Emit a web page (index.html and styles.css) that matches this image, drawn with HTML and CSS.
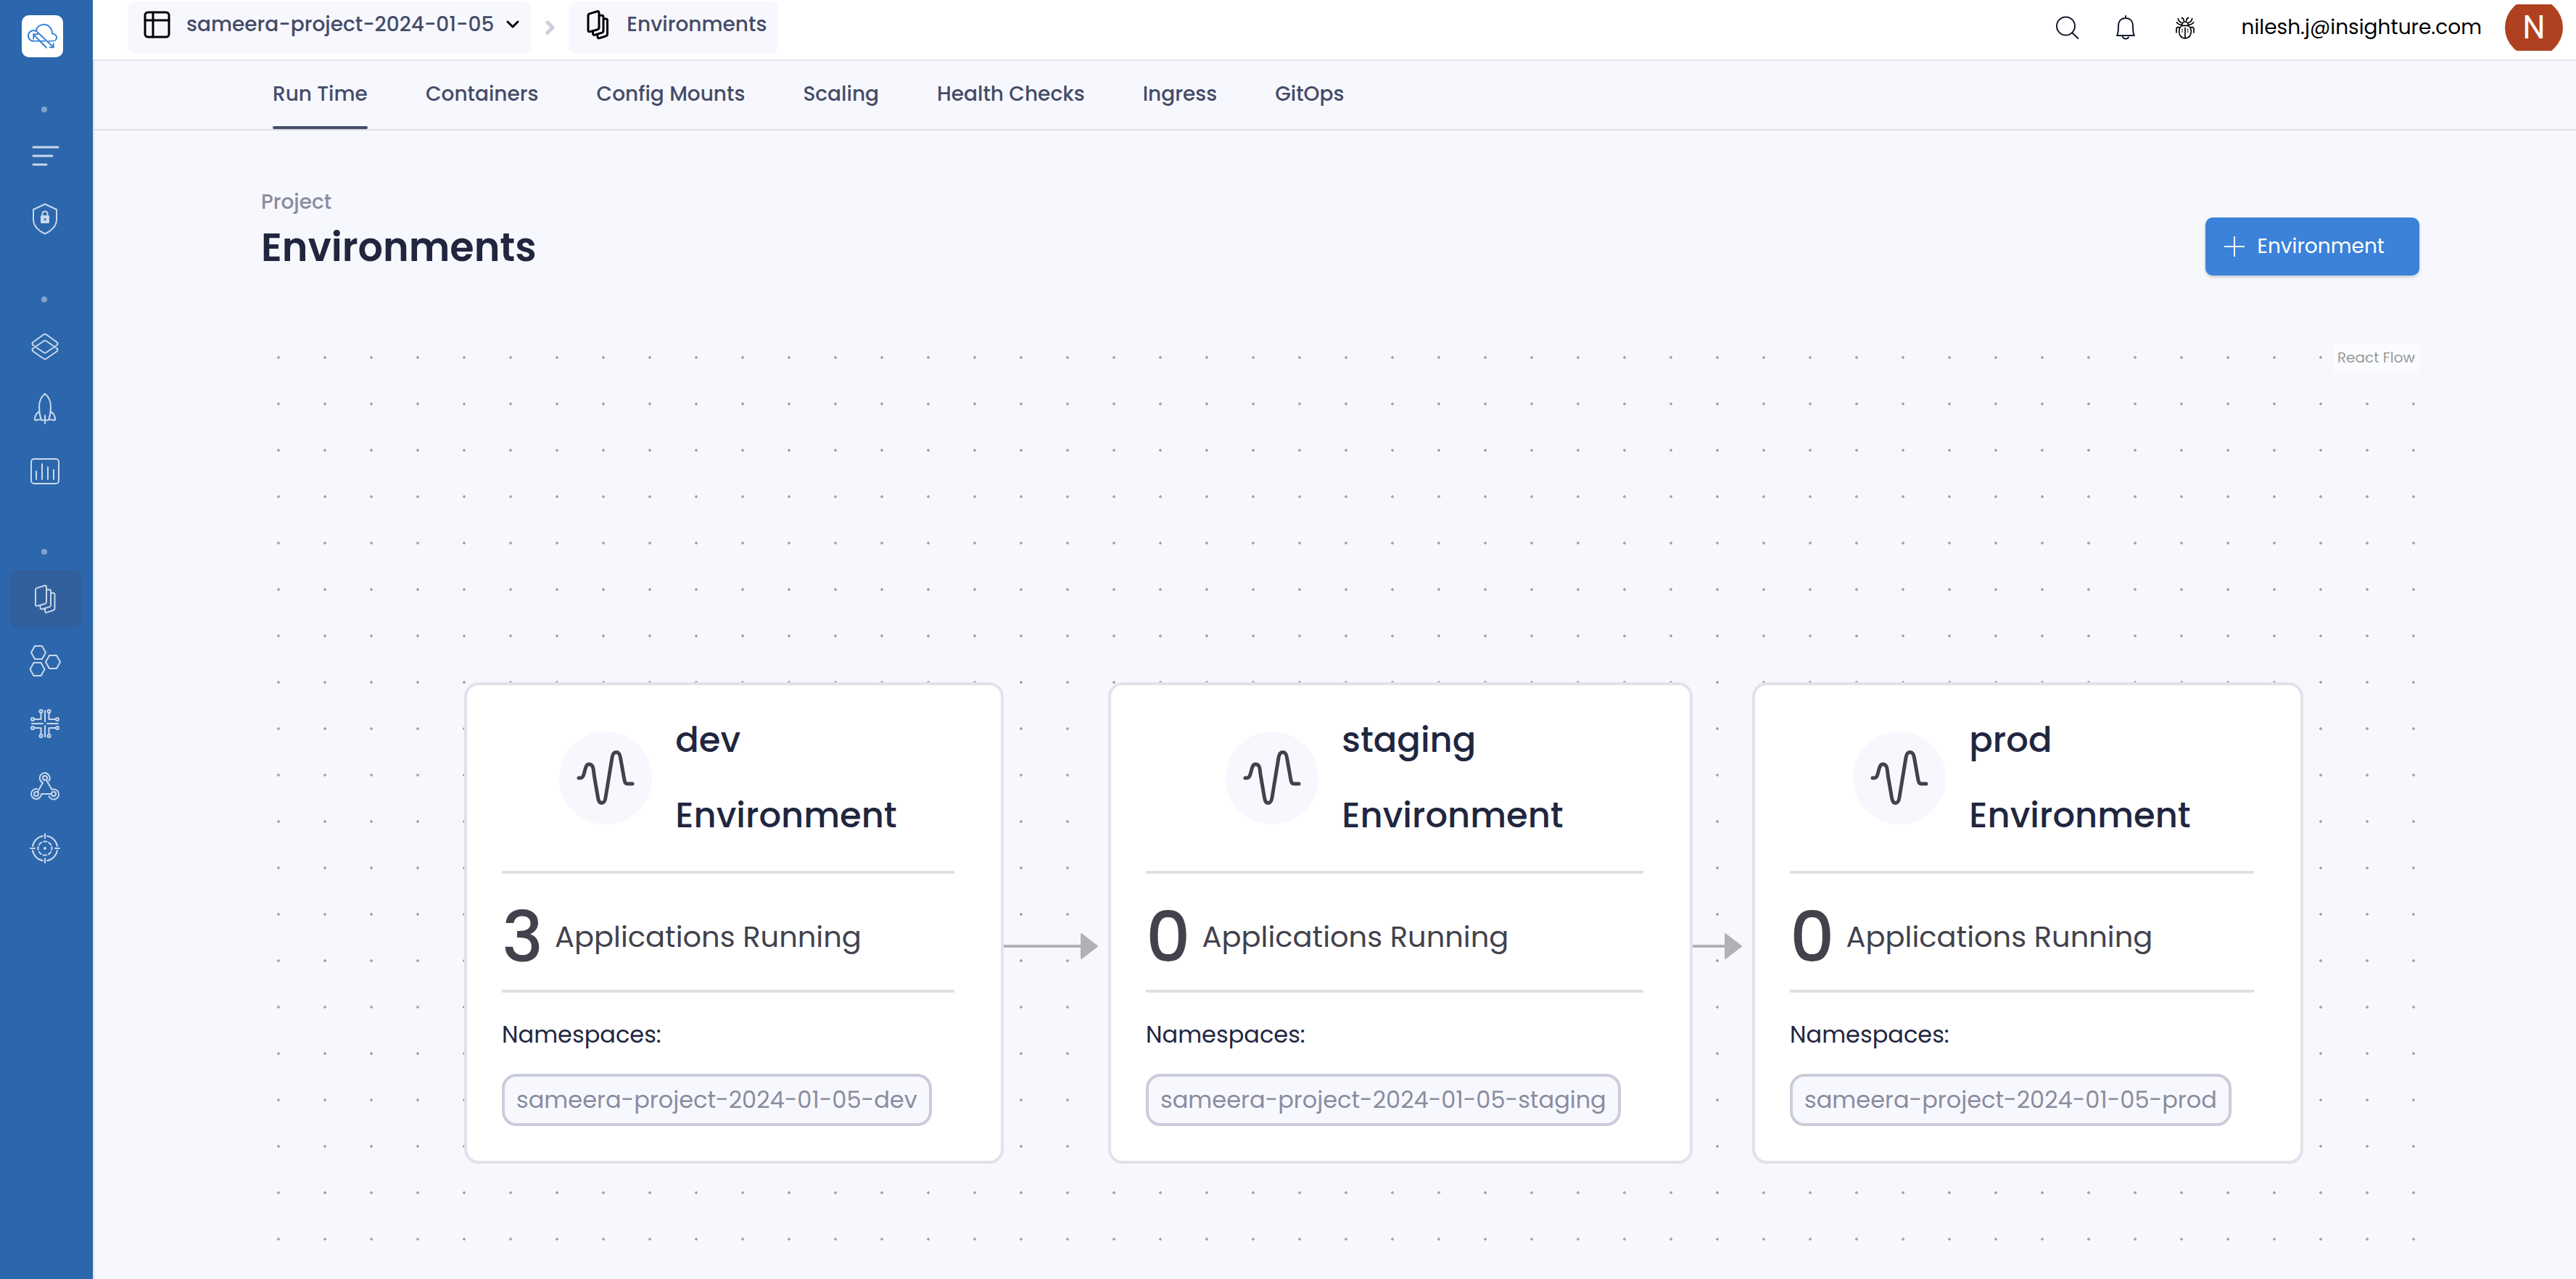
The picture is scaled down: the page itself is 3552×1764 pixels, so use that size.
FILE: index.html
```
<!DOCTYPE html>
<html lang="en">
<head>
<meta charset="utf-8">
<title>Environments</title>
<link rel="stylesheet" href="styles.css">
</head>
<body>
<svg class="defs" aria-hidden="true">
  <symbol id="stack" viewBox="0 0 30 42">
    <path d="M2 8.500q0-2 2-2.600l10.500-3.200q2.500-.7 2.500 2V25q0 2-2 2.700L4.500 30.600Q2 31.300 2 29zM17 8.200h4q2 0 2 2V29.500q0 2-2 2.600l-9.500 2.900q-3 .8-3-2V30.500M23 13h4q1.500.3 1.500 2V34q0 2-2 2.700L17.500 39.600q-2.500.7-2.500-2V35"/>
  </symbol>
  <symbol id="pulse" viewBox="0 0 80 80">
    <path d="M3 40h2.500c7 0 4.500-19 11.500-19s6 8 7.500 17l5 29c1.500 10 9 10 10.500 0L49 12c1.500-10 10-10 11.500 0l5.500 31q1 5 4 5H77"/>
  </symbol>
</svg>

<nav class="sidebar" aria-label="Main">
  <a class="logo" href="#" aria-label="Home">
    <svg viewBox="30 33 172 172"><path d="M128 139H80a22 22 0 1 1 14-38L160 163M90 95C94 68 138 58 154 92q3 7 3 16c24 2 24 31 0 31H141M134 168 80 113M79 132V111H99M144 165H162V148"/></svg>
  </a>
  <div class="group">
    <span class="dot"></span>
    <a class="item" href="#" aria-label="Menu"><svg class="bold" viewBox="0 0 44 44"><path d="M6 9H40M6 21H32M6 33H24"/></svg></a>
    <a class="item" href="#" aria-label="Security"><svg viewBox="0 0 44 44"><path d="M22 1.500 38 9V23c0 9-8 16-16 19.500C14 39 6 32 6 23V9zM18.500 17.500V15q0-3.500 3.500-3.500t3.500 3.500v2.500"/><path class="fill" fill-rule="evenodd" d="M17.500 17h9q1.500 0 1.500 1.500v8q0 1.500-1.500 1.500h-9q-1.500 0-1.500-1.500v-8q0-1.500 1.500-1.500zM22 21a1.500 1.500 0 1 0 0 3 1.500 1.500 0 0 0 0-3z"/></svg></a>
  </div>
  <div class="group">
    <span class="dot"></span>
    <a class="item" href="#" aria-label="Layers"><svg viewBox="0 0 44 44"><path d="M20 5.500q2-1.500 4 0L38.500 16q2 2 0 4L24 30q-2 1.500-4 0L5.500 20q-2-2 0-4zM20 14.500q2-1.500 4 0L38.500 24.500q2 2 0 4L24 38.500q-2 1.500-4 0L5.500 28.500q-2-2 0-4z"/></svg></a>
    <a class="item" href="#" aria-label="Deployments"><svg viewBox="0 0 44 44"><path d="M22 1C17 5 14 12 14 19q0 10 3 18.500H27Q30 29 30 19C30 12 27 5 22 1zM14.500 25.500Q8 29 8 36.500q0 1.500 2 1l7-1.500M29.500 25.500Q36 29 36 36.500q0 1.500-2 1L27 36M22 31v11"/></svg></a>
    <a class="item" href="#" aria-label="Metrics"><svg viewBox="0 0 44 44"><rect x="3" y="5" width="38" height="34" rx="4"/><path d="M10 22v11M18 12v21M26 16v17M34 20v13"/></svg></a>
  </div>
  <div class="group">
    <span class="dot"></span>
    <a class="item active" href="#" aria-label="Environments" aria-current="page"><svg class="tall" viewBox="0 0 30 42"><use href="#stack"/></svg></a>
    <a class="item" href="#" aria-label="Clusters"><svg viewBox="0 0 44 44"><path d="M8 1h10l5 9-5 9H8L3 10zM6.500 24h10l5 9-5 9h-10l-5-9zM28 14h10l5 9-5 9H28l-5-9z"/></svg></a>
    <a class="item" href="#" aria-label="Integrations"><svg viewBox="0 0 44 44"><path d="M22 4v15M22 25v15M4 22h15M25 22h15M7 16h9.500V7M37 16h-9.500V7M7 28h9.500v9M37 28h-9.500v9"/><circle cx="16.500" cy="5" r="2"/><circle cx="27.500" cy="5" r="2"/><circle cx="16.500" cy="39" r="2"/><circle cx="27.500" cy="39" r="2"/><circle cx="5" cy="16" r="2"/><circle cx="5" cy="28" r="2"/><circle cx="39" cy="16" r="2"/><circle cx="39" cy="28" r="2"/></svg></a>
    <a class="item" href="#" aria-label="Webhooks"><svg viewBox="0 0 44 44"><circle cx="22" cy="11" r="3"/><circle cx="10" cy="33" r="3"/><circle cx="34" cy="33" r="3"/><path d="M12 30 19 17.500a7 7 0 1 1 8.500-2.500M24 14l7.500 13a7 7 0 1 1-4 9M31 33H17a7 7 0 1 1-6-7"/></svg></a>
    <a class="item" href="#" aria-label="Targets"><svg viewBox="0 0 44 44"><path d="M25 5A17.500 17.500 0 0 1 39 19M39 25A17.500 17.500 0 0 1 25 39M19 39A17.500 17.500 0 0 1 5 25M5 19A17.500 17.500 0 0 1 19 5M22 2v6M22 36v6M2 22h6M36 22h6"/><circle cx="22" cy="22" r="9.500" stroke-dasharray="4.500 2.960" stroke-dashoffset="2.250"/><circle class="fill" cx="22" cy="22" r="2"/></svg></a>
  </div>
</nav>

<div class="main">
  <header class="header">
    <button class="crumb" type="button">
      <svg class="crumb-icon" viewBox="0 0 40 40"><rect x="3" y="3" width="33" height="34" rx="4"/><path d="M3 14H36M14 3V37"/></svg>
      <span>sameera-project-2024-01-05</span>
      <svg class="caret" viewBox="0 0 18 12"><path d="M2 2l7 7 7-7"/></svg>
    </button>
    <svg class="sep" viewBox="0 0 14 20"><path d="M3 3l7 7-7 7"/></svg>
    <a class="crumb last" href="#">
      <svg class="crumb-stack" viewBox="0 0 30 42"><use href="#stack"/></svg>
      <span>Environments</span>
    </a>
    <div class="tools">
      <button class="tool" type="button" aria-label="Search"><svg viewBox="0 0 32 34"><circle cx="13.500" cy="15" r="12.500"/><path d="M22 24l8.500 8"/></svg></button>
      <button class="tool" type="button" aria-label="Notifications"><svg viewBox="0 0 32 34"><path d="M15 1v3M3 28h24c-2-3-2-8-2-13 0-7-4-11-10-11S5 8 5 15c0 5 0 10-2 13zM10.500 28.500q1 4 4.500 4 3 0 4-2"/></svg></button>
      <button class="tool" type="button" aria-label="Report a bug"><svg class="thin" viewBox="532 66 96 102"><path d="M567 109h26q12 8 12 24 0 26-25 29-25-3-25-29 0-16 12-24zM567 108q0-14 13-15 13 1 13 15M580 119V162M575 89q-1-10-9-12M585 89q1-10 9-12M551 80q1 12 14 17M609 80q-1 12-14 17M545 95q6 10 20 11M615 95q-6 10-20 11M556 116h-6q-6 0-6 8v14M604 116h6q6 0 6 8v14M568 125v1M568 134v1M591 125v1M591 134v1"/></svg></button>
    </div>
    <span class="email">nilesh.j@insighture.com</span>
    <span class="avatar"><span class="initial">N</span></span>
  </header>

  <div class="body">
    <nav class="tabs" aria-label="Sections">
      <a class="tab current" href="#">Run Time</a>
      <a class="tab" href="#">Containers</a>
      <a class="tab" href="#">Config Mounts</a>
      <a class="tab" href="#">Scaling</a>
      <a class="tab" href="#">Health Checks</a>
      <a class="tab" href="#">Ingress</a>
      <a class="tab" href="#">GitOps</a>
    </nav>

    <main class="page">
      <div class="page-head">
        <div>
          <p class="kicker">Project</p>
          <h1>Environments</h1>
        </div>
        <button class="primary" type="button">
          <svg viewBox="0 0 28 28"><path d="M14 0V28M0 14H28"/></svg>
          <span>Environment</span>
        </button>
      </div>

      <div class="canvas">
        <svg class="edges" aria-hidden="true">
          <path class="edge" d="M1023 831H1134M1973 831H2022"/>
          <path class="head" d="M1131 814l22 17-22 17zM2019 814l22 17-22 17z"/>
        </svg>

        <article class="node" style="left:280px;top:467px;width:744px">
          <div class="node-head">
            <span class="badge"><svg><use href="#pulse"/></svg></span>
            <h2>dev<br>Environment</h2>
          </div>
          <p class="count"><strong>3</strong> <span>Applications Running</span></p>
          <p class="label">Namespaces:</p>
          <span class="tag">sameera-project-2024-01-05-dev</span>
        </article>

        <article class="node" style="left:1168px;top:467px;width:806px">
          <div class="node-head">
            <span class="badge"><svg><use href="#pulse"/></svg></span>
            <h2>staging<br>Environment</h2>
          </div>
          <p class="count"><strong>0</strong> <span>Applications Running</span></p>
          <p class="label">Namespaces:</p>
          <span class="tag">sameera-project-2024-01-05-staging</span>
        </article>

        <article class="node" style="left:2056px;top:467px;width:760px">
          <div class="node-head">
            <span class="badge"><svg><use href="#pulse"/></svg></span>
            <h2>prod<br>Environment</h2>
          </div>
          <p class="count"><strong>0</strong> <span>Applications Running</span></p>
          <p class="label">Namespaces:</p>
          <span class="tag">sameera-project-2024-01-05-prod</span>
        </article>

        <a class="attribution" href="#">React Flow</a>
      </div>
    </main>
  </div>
</div>
</body>
</html>
```
FILE: styles.css
```
* { box-sizing: border-box; }

body {
  margin: 0;
  min-height: 100vh;
  display: flex;
  background: #f7f8fe;
  color: #21263f;
  font-family: Poppins, Inter, sans-serif;
  font-size: 28px;
}

h1, h2, p { margin: 0; }
a { color: inherit; text-decoration: none; }
button { font: inherit; color: inherit; border: 0; background: none; padding: 0; cursor: pointer; }
svg { display: block; flex: none; fill: none; stroke: currentColor; stroke-linecap: round; stroke-linejoin: round; }
.defs { position: absolute; width: 0; height: 0; }

/* Sidebar */
.sidebar {
  flex: none;
  width: 128px;
  padding: 21px 16px 0 14px;
  background: #2c67ad;
  color: #c9d8eb;
}
.logo {
  display: block;
  width: 57px;
  margin-left: 16px;
  margin-bottom: 68px;
  border-radius: 10px;
  background: #fff;
  color: #3b82d8;
}
.logo svg { width: 57px; height: 58px; stroke-width: 6; stroke-linecap: butt; stroke-linejoin: miter; }
.group {
  display: flex;
  flex-direction: column;
  gap: 6px;
  margin-bottom: 67px;
}
.dot {
  width: 8px;
  height: 8px;
  margin: 0 0 15px 43px;
  border-radius: 50%;
  background: #80a4ce;
}
.item {
  height: 80px;
  padding-left: 26px;
  display: flex;
  align-items: center;
  border-radius: 8px;
}
.item svg { width: 44px; height: 44px; stroke-width: 2; }
.item .bold { stroke-width: 3; }
.item .tall { width: 30px; height: 42px; margin-left: 7px; }
.item .fill { fill: currentColor; stroke: none; }
.item.active { background: #31609d; }

/* Header */
.main { flex: 1; min-width: 0; display: flex; flex-direction: column; }
.header {
  height: 84px;
  padding: 2px 18px 8px 48px;
  display: flex;
  align-items: center;
  background: #fff;
  border-bottom: 2px solid #e1e3e9;
  color: #000;
}
.crumb {
  height: 72px;
  padding: 0 16px 8px 21px;
  display: flex;
  align-items: center;
  border-radius: 10px;
  background: #f7f8fe;
  font-weight: 500;
}
.crumb span { color: #454c68; }
.crumb-icon { width: 40px; height: 40px; margin-right: 20px; stroke-width: 3; }
.crumb-stack { width: 32px; height: 42px; margin: 0 24px 0 3px; stroke-width: 3; }
.caret { width: 18px; height: 12px; margin-left: 17px; stroke-width: 3; }
.sep { width: 14px; height: 20px; margin: 0 18px 0 20px; stroke-width: 5; color: #cdcedb; }
.tools { margin-left: auto; display: flex; gap: 49px; }
.tool { width: 32px; height: 34px; }
.tool svg { width: 32px; height: 34px; stroke-width: 2; color: #131a2c; }
.tool .thin { stroke-width: 5; color: #000; }
.email { margin: 0 32px 0 62px; }
.avatar {
  width: 80px;
  height: 64px;
  display: flex;
  align-items: center;
  justify-content: center;
  overflow: hidden;
}
.initial {
  flex: none;
  width: 80px;
  height: 80px;
  border-radius: 50%;
  background: #af4121;
  color: #fff;
  font: 44px/80px Roboto, sans-serif;
  text-align: center;
}

/* Tabs */
.body { flex: 1; display: flex; flex-direction: column; border-left: 2px solid #e1e1ea; }
.tabs {
  padding-left: 246px;
  display: flex;
  gap: 80px;
  border-bottom: 2px solid #dcdce1;
  color: #454c68;
  font-weight: 500;
}
.tab { line-height: 92px; padding-bottom: 2px; }
.tab.current { padding-bottom: 0; }
.tab.current::after { content: ""; display: block; height: 4px; margin-top: -2px; border-radius: 2px; background: #454c68; }

/* Page */
.page { flex: 1; display: flex; flex-direction: column; padding: 78px 216px 0 230px; }
.page-head { display: flex; justify-content: space-between; align-items: flex-end; margin-bottom: 92px; }
.kicker { line-height: 42px; color: #8a8ca0; font-weight: 500; }
h1 { font-size: 54px; line-height: 82px; font-weight: 600; }
.primary {
  height: 80px;
  margin-bottom: 2px;
  padding: 0 48px 0 26px;
  display: flex;
  align-items: center;
  gap: 18px;
  border-radius: 10px;
  background: #3b82d8;
  color: #fff;
  box-shadow: 0 2px 4px rgba(0, 0, 0, .2);
}
.primary svg { width: 28px; height: 28px; stroke-width: 2; stroke-linecap: butt; }

/* Flow canvas */
.canvas {
  position: relative;
  flex: 1;
  min-height: 1200px;
  background-image: radial-gradient(circle, #a9a9ad 2px, transparent 2px);
  background-size: 64px 64px;
  background-position: -8px -13px;
}
.edges { position: absolute; inset: 0; width: 100%; height: 100%; color: #b1b1b7; stroke-width: 4; stroke-linecap: butt; }
.edges .head { fill: currentColor; stroke-width: 2; }
.attribution {
  position: absolute;
  top: 0;
  right: 0;
  padding: 0 6px;
  background: rgba(255, 255, 255, .5);
  color: #999;
  font-size: 20px;
  line-height: 38px;
}
.node {
  position: absolute;
  padding: 24px 64px 48px 48px;
  background: #fff;
  border: 4px solid #e2e3ea;
  border-radius: 20px;
}
.node-head {
  display: flex;
  align-items: center;
  justify-content: center;
  gap: 32px;
  padding-bottom: 24px;
}
.badge {
  width: 128px;
  height: 128px;
  display: grid;
  place-items: center;
  border-radius: 50%;
  background: #f7f8fe;
  color: #42424d;
}
.badge svg { width: 80px; height: 80px; stroke-width: 5; }
h2 { font-size: 48px; line-height: 104px; font-weight: 500; }
.count {
  height: 168px;
  padding-top: 14px;
  display: flex;
  align-items: center;
  gap: 16px;
  border: solid #dfe0e0;
  border-width: 4px 0;
  color: #42424d;
  font-size: 40px;
}
.count strong { font-size: 96px; font-weight: 500; }
.label { margin: 34px 0 30px; font-size: 32px; line-height: 48px; }
.tag {
  display: block;
  width: fit-content;
  padding: 0 16px;
  border: 4px solid #cbccd9;
  border-radius: 20px;
  background: #f7f8fe;
  color: #8a8ca0;
  font-size: 32px;
  line-height: 64px;
  white-space: nowrap;
}
```
